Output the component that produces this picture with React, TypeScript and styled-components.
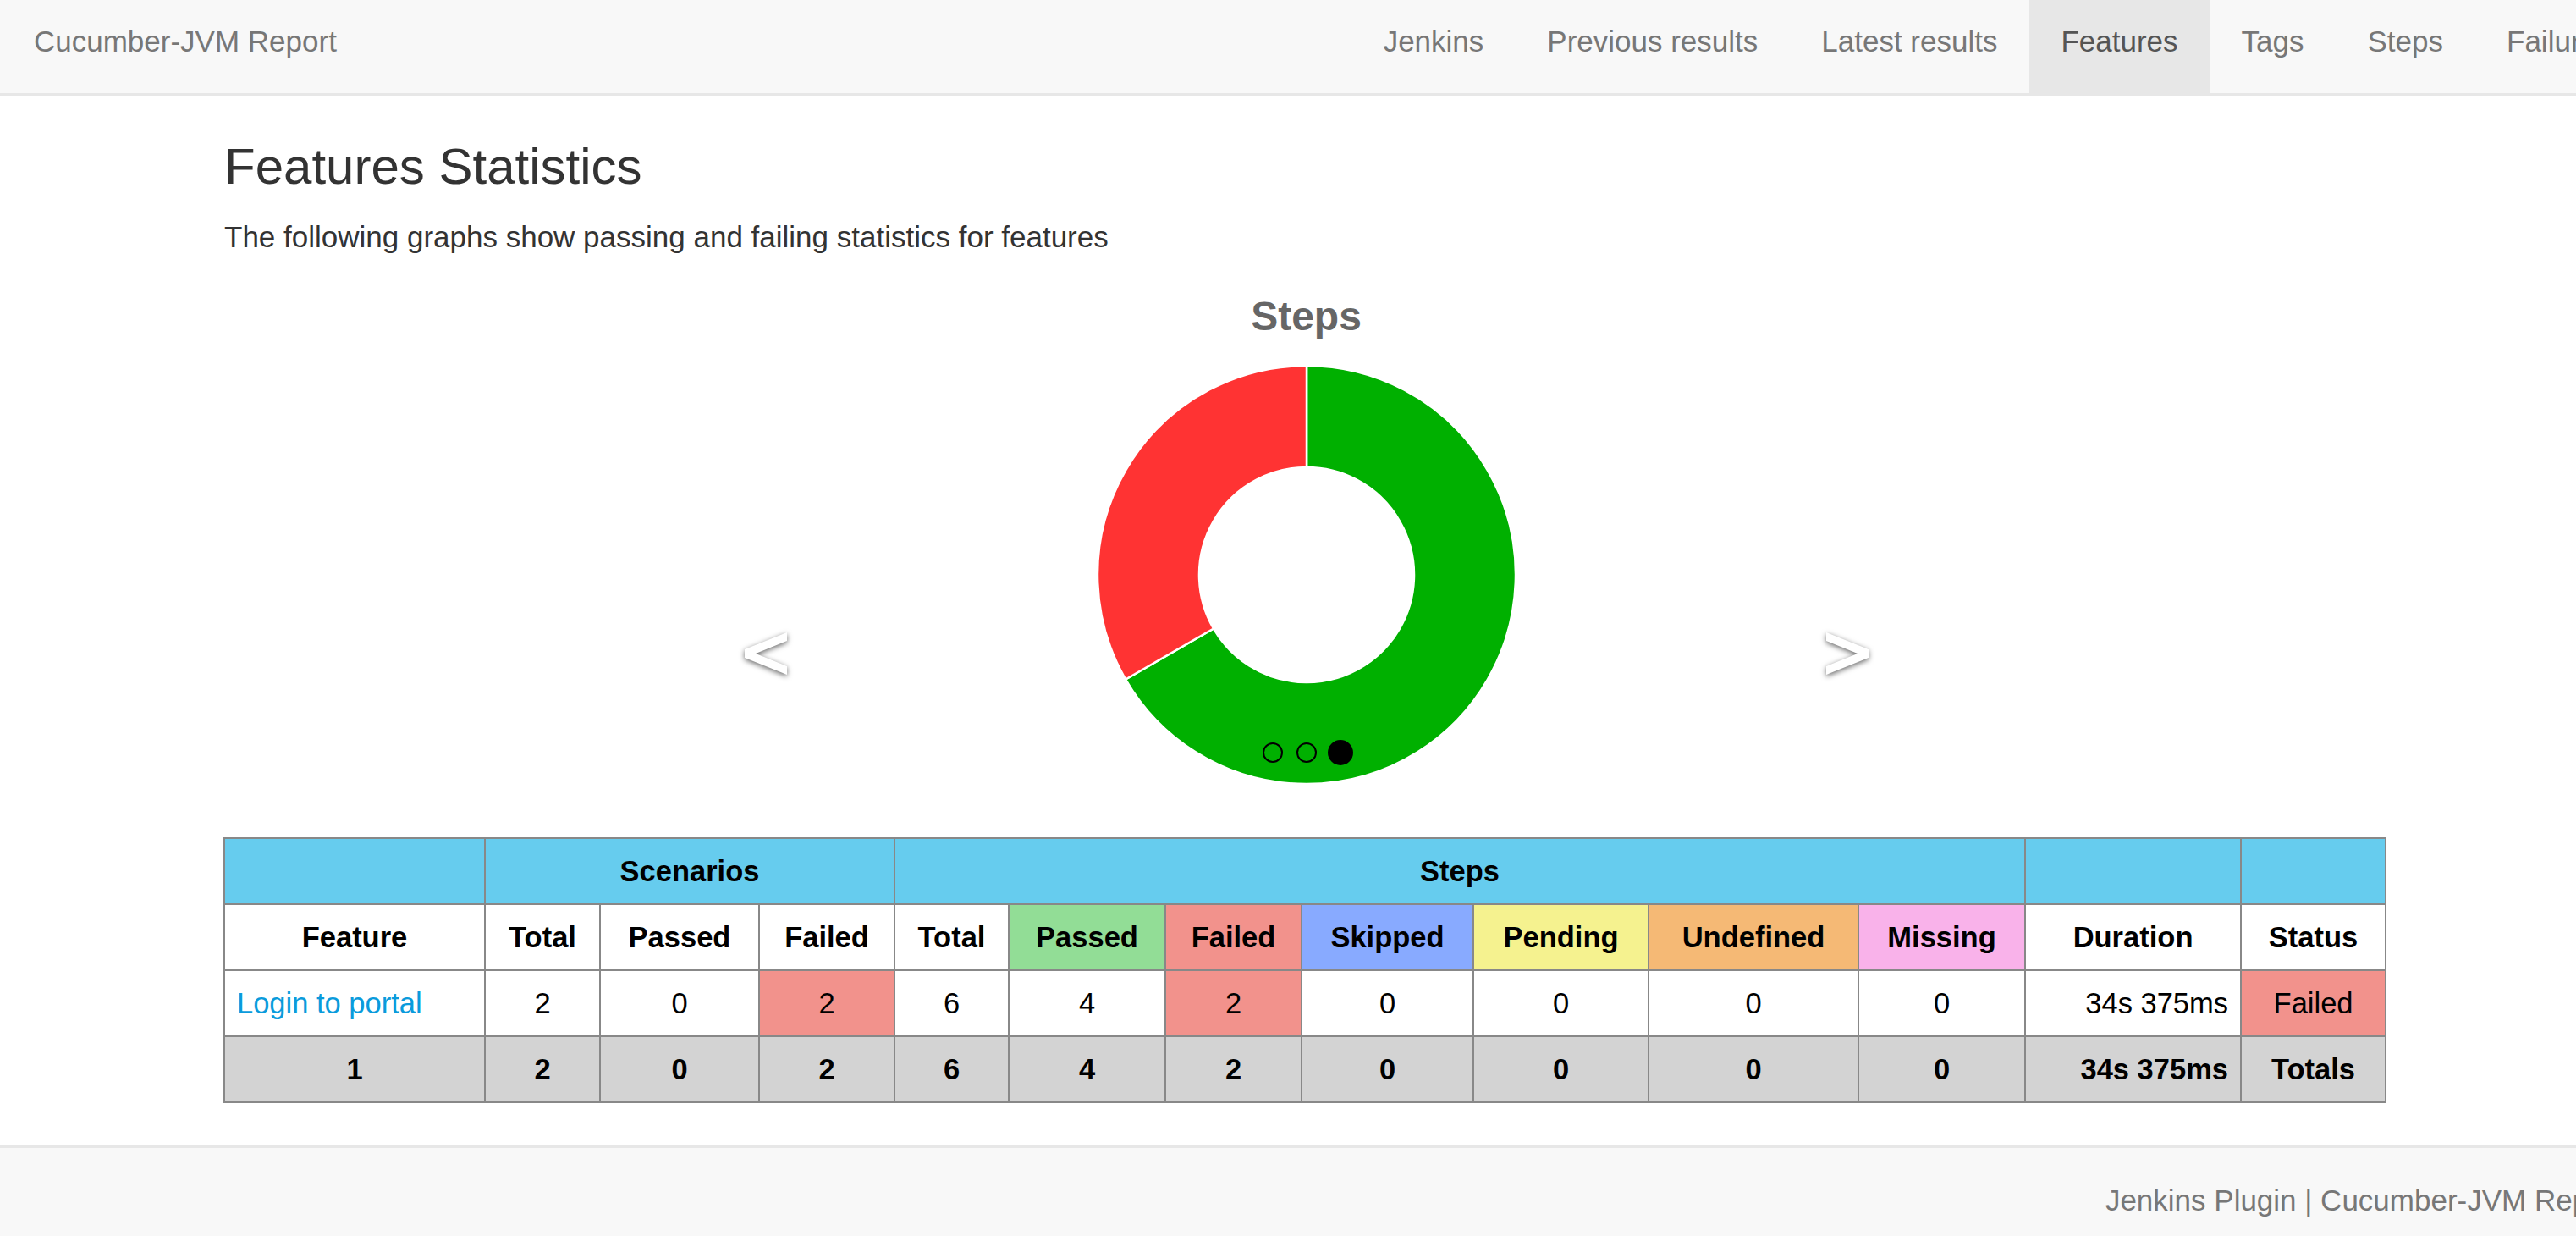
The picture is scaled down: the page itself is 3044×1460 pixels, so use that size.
import React from "react";
import styled, { createGlobalStyle } from "styled-components";

const GlobalStyle = createGlobalStyle`
  html, body { margin: 0; padding: 0; overflow: hidden; background: #fff; }
  body { font-family: "Liberation Sans", Arial, Helvetica, sans-serif; color: #333; }
  * { box-sizing: border-box; }
`;

const Page = styled.div`
  width: 3124px;
  min-height: 1460px;
  display: flex;
  flex-direction: column;
`;

const Navbar = styled.nav`
  display: flex;
  align-items: stretch;
  height: 113px;
  background: #f8f8f8;
  border-bottom: 3px solid #e7e7e7;
  white-space: nowrap;
`;

const Brand = styled.a`
  padding: 24px 0 0 40px;
  font-size: 35px;
  line-height: 50px;
  color: #777;
  text-decoration: none;
`;

const NavList = styled.ul`
  list-style: none;
  margin: 0 0 0 auto;
  padding: 0;
  display: flex;
`;

const NavLink = styled.a<{ $active?: boolean }>`
  display: block;
  height: 110px;
  padding: 24px 37.5px 0;
  font-size: 35px;
  line-height: 50px;
  color: ${(p) => (p.$active ? "#555" : "#777")};
  background: ${(p) => (p.$active ? "#e7e7e7" : "transparent")};
  text-decoration: none;
`;

const Main = styled.main`
  margin-left: 264px;
  width: 2554px;
  padding-top: 51px;
`;

const Title = styled.h2`
  margin: 0;
  padding-left: 1px;
  font-size: 60px;
  line-height: 66px;
  font-weight: 400;
  color: #333;
`;

const Lead = styled.p`
  margin: 25px 0 0;
  padding-left: 1px;
  font-size: 35px;
  line-height: 50px;
  color: #333;
`;

const ChartRow = styled.div`
  margin-top: 41px;
  padding-left: 5px;
  display: flex;
  justify-content: center;
  align-items: flex-start;
`;

const ArrowButton = styled.div`
  width: 50px;
  height: 50px;
  margin-top: 401px;
  filter: drop-shadow(0 2px 3px rgba(0, 0, 0, 0.6));
  svg { display: block; }
`;

const ChartPanel = styled.div`
  width: 1228px;
  display: flex;
  flex-direction: column;
  align-items: center;
`;

const ChartTitle = styled.div`
  font-size: 48px;
  line-height: 56px;
  font-weight: 700;
  color: #666;
`;

const DonutWrap = styled.div`
  position: relative;
  margin-top: 27px;
  width: 500px;
  height: 500px;
  svg { display: block; }
`;

const Indicators = styled.ol`
  position: absolute;
  left: 0;
  right: 0;
  top: 445px;
  height: 30px;
  margin: 0;
  padding: 0;
  list-style: none;
  display: flex;
  justify-content: center;
  align-items: center;
  gap: 10px;
`;

const Dot = styled.li<{ $active?: boolean }>`
  width: ${(p) => (p.$active ? 30 : 24)}px;
  height: ${(p) => (p.$active ? 30 : 24)}px;
  margin: 0 ${(p) => (p.$active ? 0 : 3)}px;
  border-radius: 50%;
  border: 2.5px solid #000;
  background: ${(p) => (p.$active ? "#000" : "transparent")};
`;

const StatsTable = styled.table`
  margin-top: 60px;
  width: 2554px;
  border-collapse: collapse;
  table-layout: fixed;
  font-size: 34.5px;
  color: #000;
`;

const HeadCell = styled.th<{ $bg?: string }>`
  border: 2px solid #888;
  padding: 13px 14px;
  line-height: 50px;
  text-align: center;
  font-weight: 700;
  white-space: nowrap;
  overflow: hidden;
  background: ${(p) => p.$bg || "#fff"};
`;

const Cell = styled.td<{ $bg?: string; $align?: string; $bold?: boolean }>`
  border: 2px solid #888;
  padding: 13px 14px;
  line-height: 50px;
  white-space: nowrap;
  overflow: hidden;
  text-align: ${(p) => p.$align || "center"};
  font-weight: ${(p) => (p.$bold ? 700 : 400)};
  background: ${(p) => p.$bg || "#fff"};
`;

const FeatureLink = styled.a`
  color: #0a9bdc;
  text-decoration: none;
`;

const Footer = styled.footer`
  margin-top: 50px;
  flex: 1;
  background: #f8f8f8;
  border-top: 3px solid #e7e7e7;
  padding: 37px 24px 0 0;
  text-align: right;
  font-size: 35px;
  line-height: 50px;
  color: #777;
  white-space: nowrap;
`;

const C = {
  header: "#66ccee",
  passed: "#92dd96",
  failed: "#f2928c",
  skipped: "#88aaff",
  pending: "#f5f28f",
  undefined: "#f5b975",
  missing: "#f9b2ea",
  total: "#d3d3d3",
};

const widths = [308, 136, 188, 160, 135, 185, 161, 203, 207, 248, 197, 255, 171];

const subHeaders: { label: string; bg?: string }[] = [
  { label: "Feature" },
  { label: "Total" },
  { label: "Passed" },
  { label: "Failed" },
  { label: "Total" },
  { label: "Passed", bg: C.passed },
  { label: "Failed", bg: C.failed },
  { label: "Skipped", bg: C.skipped },
  { label: "Pending", bg: C.pending },
  { label: "Undefined", bg: C.undefined },
  { label: "Missing", bg: C.missing },
  { label: "Duration" },
  { label: "Status" },
];

const navItems = ["Jenkins", "Previous results", "Latest results", "Features", "Tags", "Steps", "Failures"];

const Arrow = ({ dir }: { dir: "prev" | "next" }) => (
  <ArrowButton>
    <svg width="50" height="50" viewBox="0 0 50 50">
      <polygon
        fill="#fff"
        points={dir === "prev" ? "50,0 50,10 13,25 50,40 50,50 0,30 0,20" : "0,0 0,10 37,25 0,40 0,50 50,30 50,20"}
      />
    </svg>
  </ArrowButton>
);

const Donut = () => {
  const cx = 250;
  const cy = 250;
  const R = 247;
  const r = 127;
  const ang = (150 * Math.PI) / 180;
  const ox = cx + R * Math.cos(ang);
  const oy = cy + R * Math.sin(ang);
  const ix = cx + r * Math.cos(ang);
  const iy = cy + r * Math.sin(ang);
  const green = `M ${cx} ${cy - R} A ${R} ${R} 0 1 1 ${ox} ${oy} L ${ix} ${iy} A ${r} ${r} 0 1 0 ${cx} ${cy - r} Z`;
  const red = `M ${ox} ${oy} A ${R} ${R} 0 0 1 ${cx} ${cy - R} L ${cx} ${cy - r} A ${r} ${r} 0 0 0 ${ix} ${iy} Z`;
  return (
    <svg width="500" height="500" viewBox="0 0 500 500">
      <path d={green} fill="#00b000" stroke="#fff" strokeWidth="2.5" />
      <path d={red} fill="#ff3333" stroke="#fff" strokeWidth="2.5" />
    </svg>
  );
};

export default function App() {
  return (
    <Page>
      <GlobalStyle />
      <Navbar>
        <Brand href="#">Cucumber-JVM Report</Brand>
        <NavList>
          {navItems.map((n) => (
            <li key={n}>
              <NavLink href="#" $active={n === "Features"}>
                {n}
              </NavLink>
            </li>
          ))}
        </NavList>
      </Navbar>

      <Main>
        <Title>Features Statistics</Title>
        <Lead>The following graphs show passing and failing statistics for features</Lead>

        <ChartRow>
          <Arrow dir="prev" />
          <ChartPanel>
            <ChartTitle>Steps</ChartTitle>
            <DonutWrap>
              <Donut />
              <Indicators>
                <Dot />
                <Dot />
                <Dot $active />
              </Indicators>
            </DonutWrap>
          </ChartPanel>
          <Arrow dir="next" />
        </ChartRow>

        <StatsTable>
          <colgroup>
            {widths.map((w, i) => (
              <col key={i} style={{ width: w }} />
            ))}
          </colgroup>
          <thead>
            <tr>
              <HeadCell $bg={C.header} />
              <HeadCell $bg={C.header} colSpan={3}>
                Scenarios
              </HeadCell>
              <HeadCell $bg={C.header} colSpan={7}>
                Steps
              </HeadCell>
              <HeadCell $bg={C.header} />
              <HeadCell $bg={C.header} />
            </tr>
            <tr>
              {subHeaders.map((h, i) => (
                <HeadCell key={i} $bg={h.bg}>
                  {h.label}
                </HeadCell>
              ))}
            </tr>
          </thead>
          <tbody>
            <tr>
              <Cell $align="left">
                <FeatureLink href="#">Login to portal</FeatureLink>
              </Cell>
              <Cell>2</Cell>
              <Cell>0</Cell>
              <Cell $bg={C.failed}>2</Cell>
              <Cell>6</Cell>
              <Cell>4</Cell>
              <Cell $bg={C.failed}>2</Cell>
              <Cell>0</Cell>
              <Cell>0</Cell>
              <Cell>0</Cell>
              <Cell>0</Cell>
              <Cell $align="right">34s 375ms</Cell>
              <Cell $bg={C.failed}>Failed</Cell>
            </tr>
            <tr>
              {["1", "2", "0", "2", "6", "4", "2", "0", "0", "0", "0"].map((v, i) => (
                <Cell key={i} $bold $bg={C.total}>
                  {v}
                </Cell>
              ))}
              <Cell $bold $bg={C.total} $align="right">
                34s 375ms
              </Cell>
              <Cell $bold $bg={C.total}>
                Totals
              </Cell>
            </tr>
          </tbody>
        </StatsTable>
      </Main>

      <Footer>Jenkins Plugin | Cucumber-JVM Report</Footer>
    </Page>
  );
}
